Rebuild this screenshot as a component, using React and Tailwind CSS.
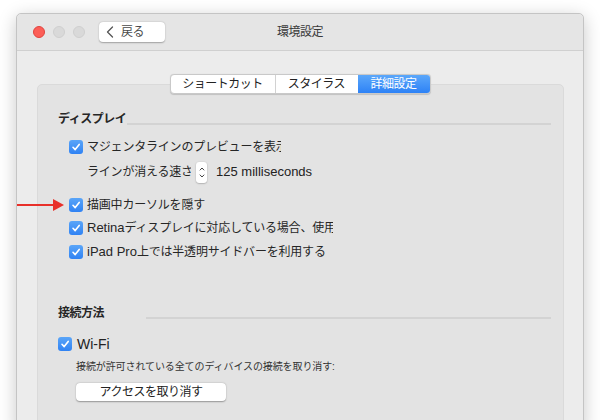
import React from "react";

const FONT = { fontFamily: '"Liberation Sans", "Noto Sans CJK JP", sans-serif' };

const Check = ({ className = "" }) => (
  <span
    className={`flex h-[14px] w-[14px] shrink-0 items-center justify-center rounded-[3px] bg-gradient-to-b from-[#5aa5f8] to-[#2f82f3] ${className}`}
  >
    <svg width="10" height="10" viewBox="0 0 10 10">
      <path d="M2 5.3 L4.2 7.6 L8.2 2.4" fill="none" stroke="#fff" strokeWidth="1.6" strokeLinecap="round" strokeLinejoin="round" />
    </svg>
  </span>
);

const SectionHeader = ({ label, lineGap }) => (
  <div className="flex h-[18px] items-center">
    <span className="text-[12px] font-bold tracking-[-0.5px] text-[#262626]">{label}</span>
    <div className={`mt-[10px] h-[2px] flex-1 bg-[#d3d3d3] ${lineGap}`} />
  </div>
);

const CheckRow = ({ children, h = "h-[24px]" }) => (
  <div className={`ml-[11px] flex items-center gap-[4px] ${h}`}>
    <Check />
    <span className="overflow-hidden whitespace-nowrap text-[12px] tracking-[-0.2px] text-[#262626]">
      {children}
    </span>
  </div>
);

const Latin = ({ children }) => <span className="text-[13px] tracking-normal">{children}</span>;

export default function App() {
  return (
    <div className="relative h-[420px] w-[600px] overflow-hidden bg-white pt-[13px]" style={FONT}>
      {/* red annotation arrow */}
      <div className="absolute left-[17px] top-[199px] flex items-center">
        <div className="h-[2px] w-[36px] bg-[#e8302a]" />
        <svg width="11" height="12" viewBox="0 0 11 12">
          <path d="M0 0 L11 6 L0 12 Z" fill="#e8302a" />
        </svg>
      </div>

      <div className="ml-[16px] h-[420px] w-[568px] rounded-t-[5px] border border-[#c4c4c4] bg-[#ececec] shadow-[0_4px_18px_rgba(0,0,0,0.22)]">
        {/* title bar */}
        <div className="grid h-[37px] grid-cols-[1fr_auto_1fr] items-center rounded-t-[5px] border-b border-[#d0d0d0] bg-[#e5e5e5]">
          <div className="flex items-center">
            <span className="ml-[16px] h-[12px] w-[12px] rounded-full border border-[#e0443e] bg-[#fc5e57]" />
            <span className="ml-[8px] h-[12px] w-[12px] rounded-full border border-[#cfcfcf] bg-[#d9d9d9]" />
            <span className="ml-[8px] h-[12px] w-[12px] rounded-full border border-[#cfcfcf] bg-[#d9d9d9]" />
            <div className="ml-[14px] flex h-[20px] w-[66px] items-center rounded-[4px] bg-white pl-[7px] text-[12px] text-[#4a4a4a] shadow-[0_0.5px_1.5px_rgba(0,0,0,0.3)]">
              <svg width="8" height="12" viewBox="0 0 8 12" className="mr-[7px]">
                <path d="M6.5 1 L1.5 6 L6.5 11" fill="none" stroke="#555" strokeWidth="1.3" strokeLinecap="round" strokeLinejoin="round" />
              </svg>
              <span className="tracking-[-0.5px]">戻る</span>
            </div>
          </div>
          <div className="text-[12px] tracking-[-0.5px] text-[#3a3a3a]">環境設定</div>
          <div />
        </div>

        {/* tabs */}
        <div className="relative z-10 mt-[23px] flex justify-center">
          <div className="flex h-[20px] overflow-hidden rounded-[4px] border border-[#c9c9c9] bg-white text-[12px] tracking-[-0.5px] text-[#222] shadow-[0_0.5px_1px_rgba(0,0,0,0.15)]">
            <div className="flex w-[105px] items-center justify-center border-r border-[#d2d2d2]">ショートカット</div>
            <div className="flex w-[82px] items-center justify-center">スタイラス</div>
            <div className="flex w-[72px] items-center justify-center bg-gradient-to-b from-[#5ba7fa] to-[#2d82f6] text-white">詳細設定</div>
          </div>
        </div>

        {/* group panel */}
        <div className="-mt-[10px] ml-[20px] mr-[19px] h-[400px] rounded-[5px] border border-[#dadada] bg-[#e3e3e3] pl-[20px] pr-[12px] pt-[25px]">
          <SectionHeader label="ディスプレイ" lineGap="ml-[1px]" />

          <div className="mt-[7px]">
            <CheckRow>
              <span className="inline-block w-[194px] overflow-hidden align-middle">マジェンタラインのプレビューを表示</span>
            </CheckRow>
            <div className="ml-[29px] flex h-[26px] items-center text-[#262626]">
              <span className="w-[104px] overflow-hidden whitespace-nowrap text-[12px] tracking-[-0.2px]">ラインが消える速さ</span>
              <div className="ml-[5px] flex h-[21px] w-[11px] flex-col items-center justify-center gap-[3px] rounded-[3px] bg-white shadow-[0_0.5px_1.5px_rgba(0,0,0,0.35)]">
                <svg width="6" height="4" viewBox="0 0 6 4">
                  <path d="M0.8 3.3 L3 1 L5.2 3.3" fill="none" stroke="#444" strokeWidth="1" />
                </svg>
                <svg width="6" height="4" viewBox="0 0 6 4">
                  <path d="M0.8 0.7 L3 3 L5.2 0.7" fill="none" stroke="#444" strokeWidth="1" />
                </svg>
              </div>
              <span className="ml-[9px] text-[13px] text-[#222]">125 milliseconds</span>
            </div>
            <div className="mt-[8px]">
              <CheckRow h="h-[23px]">描画中カーソルを隠す</CheckRow>
            </div>
            <CheckRow>
              <span className="inline-block w-[246px] overflow-hidden align-middle">
                <Latin>Retina</Latin>ディスプレイに対応している場合、使用
              </span>
            </CheckRow>
            <CheckRow>
              <Latin>iPad Pro</Latin>上では半透明サイドバーを利用する
            </CheckRow>
          </div>

          <div className="mt-[40px]">
            <SectionHeader label="接続方法" lineGap="ml-[42px]" />
          </div>

          <div className="mt-[12px] flex h-[20px] items-center gap-[5px]">
            <Check />
            <span className="text-[14px] text-[#222]">Wi-Fi</span>
          </div>
          <div className="ml-[18px] mt-[3px] flex h-[18px] items-center whitespace-nowrap text-[10px] tracking-[-0.1px] text-[#333]">
            接続が許可されている全てのディバイスの接続を取り消す:
          </div>
          <div className="ml-[18px] mt-[8px] flex h-[18px] w-[150px] items-center justify-center rounded-[4px] bg-white text-[12px] tracking-[-0.5px] text-[#222] shadow-[0_0.5px_1.5px_rgba(0,0,0,0.35)]">
            アクセスを取り消す
          </div>
        </div>
      </div>
    </div>
  );
}
